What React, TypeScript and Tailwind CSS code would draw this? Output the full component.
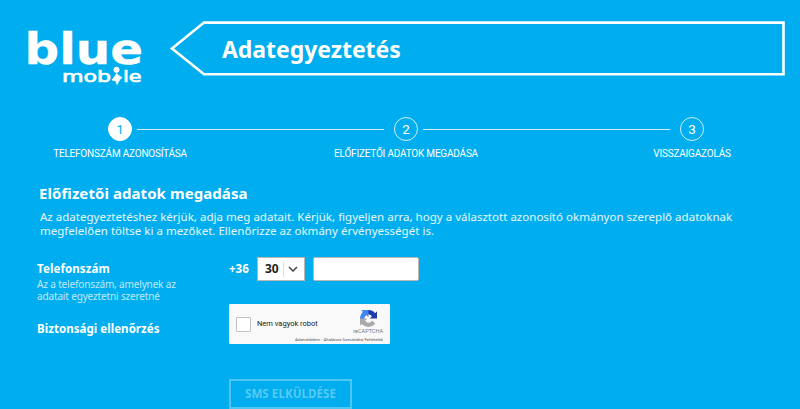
import { useState } from 'react';

interface Step { id: number; label: string; }

const steps: Step[] = [
  { id: 1, label: 'Telefonszám azonosítása' },
  { id: 2, label: 'Előfizetői adatok megadása' },
  { id: 3, label: 'Visszaigazolás' },
];

const Logo = () => (
  <svg width="116" height="56" viewBox="0 0 116 56" className="shrink-0 overflow-visible fill-white stroke-white font-['DejaVu_Sans']">
    <text x="-3.500" y="34.300" fontSize="43" fontWeight="700" strokeWidth="0.3" textLength="118.500" lengthAdjust="spacingAndGlyphs">blue</text>
    <text x="34" y="51.700" fontSize="16" strokeWidth="0.7" textLength="49" lengthAdjust="spacingAndGlyphs">mob</text>
    {/* figure standing in for the "i" */}
    <circle cx="88.500" cy="39.800" r="2.600" />
    <path d="M88.500 43.500L92 46.500L94 47.500L91.500 50L89 54.500L88 51L84 50L86.500 47Z" strokeWidth="0.8" />
    <text x="95" y="51.700" fontSize="16" strokeWidth="0.7" textLength="18.500" lengthAdjust="spacingAndGlyphs">le</text>
  </svg>
);

const Header = () => (
  <header className="flex pl-7 pt-5">
    <div className="pt-[10px]"><Logo /></div>
    <div className="ml-[25px] grid">
      <svg width="618" height="57" viewBox="0 0 618 57" className="col-start-1 row-start-1 fill-none stroke-white">
        <path d="M35 2.600H614.500V54.300H35L3 28.500Z" strokeWidth="2.600" />
      </svg>
      <h1 className="col-start-1 row-start-1 pl-[53px] pt-[13px] text-[23px] leading-[32px] font-bold tracking-[-0.05px]">Adategyeztetés</h1>
    </div>
  </header>
);

const Stepper = () => (
  <div className="mt-[31px] flex">
    {steps.map((step) => (
      <div key={step.id} className="flex w-[286px] shrink-0 flex-col items-center first:ml-[-23px]">
        <div className="flex w-full items-center">
          <div className={step.id === 1 ? 'mr-[10px] h-px flex-1' : 'mr-[10px] h-px flex-1 bg-white/80'} />
          <div className={`flex size-6 items-center justify-center rounded-full border font-[Roboto] text-[13.5px] ${step.id === 1 ? 'border-white bg-white text-[#00aeef]' : 'border-white/80'}`}>
            {step.id}
          </div>
          <div className={step.id === 3 ? 'ml-[5px] h-px w-[126px]' : 'ml-[5px] h-px w-[126px] bg-white/80'} />
        </div>
        <span className="mt-[6px] font-[Roboto] text-[10px] leading-[14px] tracking-[-0.2px] whitespace-nowrap uppercase">{step.label}</span>
      </div>
    ))}
  </div>
);

const Captcha = () => (
  <div className="flex h-10 w-[161px] justify-between rounded-[1px] bg-[#f9f9f9] font-[Roboto] text-[#222]">
    <div className="flex items-center gap-[6px] pl-[7px]">
      <span className="size-[15px] rounded-[1px] border border-[#c1c1c1] bg-white" />
      <span className="text-[7.5px] leading-none whitespace-nowrap">Nem vagyok robot</span>
    </div>
    <div className="flex w-[52px] flex-col items-end pr-[7px] pt-[6px] text-[#777]">
      <svg width="17" height="17" viewBox="0 0 64 64" className="mr-[6px] shrink-0">
        <path d="M64 31.955l-.033-1.370V4.687l-7.160 7.160C50.948 4.674 42.033.093 32.050.093c-10.400 0-19.622 4.960-25.458 12.640l11.736 11.860a15.550 15.550 0 0 1 4.754-5.334c2.050-1.600 4.952-2.906 8.968-2.906.485 0 .860.057 1.135.163 4.976.393 9.288 3.140 11.828 7.124l-8.307 8.307L64 31.953" fill="#1c3aa9" />
        <path d="M31.862.094l-1.370.033H4.594l7.160 7.160C4.580 13.147 0 22.060 0 32.046c0 10.400 4.960 19.622 12.640 25.458L24.500 45.768a15.550 15.550 0 0 1-5.334-4.754c-1.600-2.050-2.906-4.952-2.906-8.968 0-.485.057-.860.163-1.135.393-4.976 3.140-9.288 7.124-11.828l8.307 8.307L31.860.095" fill="#4285f4" />
        <path d="M.001 32.045l.033 1.370v25.898l7.160-7.160c5.860 7.173 14.774 11.754 24.760 11.754 10.400 0 19.622-4.960 25.458-12.640l-11.736-11.860a15.550 15.550 0 0 1-4.754 5.334c-2.050 1.600-4.952 2.906-8.968 2.906-.485 0-.860-.057-1.135-.163-4.976-.393-9.288-3.140-11.828-7.124l8.307-8.307c-10.522.040-22.400.066-27.295-.005" fill="#ababab" />
      </svg>
      <span className="mt-[1px] text-[5.5px] leading-[7px]">reCAPTCHA</span>
      <span className="mt-[2px] text-[4.3px] leading-[5px] whitespace-nowrap text-[#555]">Adatvédelem - Általános Szerződési Feltételek</span>
    </div>
  </div>
);

export default function App() {
  const [phone, setPhone] = useState('');

  return (
    <div className="h-[409px] w-[800px] overflow-hidden bg-[#00aeef] font-['Noto_Sans',sans-serif] text-white">
      <Header />
      <Stepper />
      <main>
        <section className="pl-[39px] pt-[22px]">
          <h2 className="text-[15px] leading-5 font-bold tracking-[0.07px]">Előfizetői adatok megadása</h2>
          <p className="mt-[7px] pl-px text-[11.5px] leading-[14px] tracking-[0.02px] whitespace-nowrap text-white/90">
            Az adategyeztetéshez kérjük, adja meg adatait. Kérjük, figyeljen arra, hogy a választott azonosító okmányon szereplő adatoknak<br />
            megfelelően töltse ki a mezőket. Ellenőrizze az okmány érvényességét is.
          </p>
        </section>
        <form className="mt-[19px] pl-[37px]" onSubmit={(e) => e.preventDefault()}>
          <div className="flex h-[47px]">
            <label htmlFor="phone" className="w-[192px] pt-1">
              <span className="block text-[11.5px] leading-4 font-bold tracking-[0.1px]">Telefonszám</span>
              <span className="mt-px block text-[10px] leading-[12px] tracking-[-0.15px] whitespace-nowrap text-white/75">Az a telefonszám, amelynek az<br />adatait egyeztetni szeretné</span>
            </label>
            <span className="w-7 pt-1 text-[11.5px] leading-4 font-bold">+36</span>
            <button type="button" className="flex h-6 w-12 items-center border border-[#bcb8b1] bg-white pl-[7px] text-[#222]">
              <span className="text-[12px] leading-none font-bold">30</span>
              <span className="ml-[4px] h-[15px] w-px bg-[#ddd]" />
              <svg width="10" height="6" viewBox="0 0 10 6" className="ml-[4px] fill-none stroke-[#444]"><path d="M1 1L5 5L9 1" strokeWidth="1.500" /></svg>
            </button>
            <input id="phone" value={phone} onChange={(e) => setPhone(e.target.value)} className="ml-2 h-6 w-[106px] rounded-[2px] border border-[#bcb8b1] bg-white px-2 text-xs text-[#222]" />
          </div>
          <div className="flex">
            <span className="w-[192px] pt-[17px] text-[11.5px] leading-4 font-bold tracking-[0.05px]">Biztonsági ellenőrzés</span>
            <Captcha />
          </div>
          <button disabled className="mt-[35px] ml-[192px] block h-[30px] w-[123px] border-2 border-white/30 text-[11.5px] font-bold tracking-[0.1px] text-white/35">SMS ELKÜLDÉSE</button>
        </form>
      </main>
    </div>
  );
}
